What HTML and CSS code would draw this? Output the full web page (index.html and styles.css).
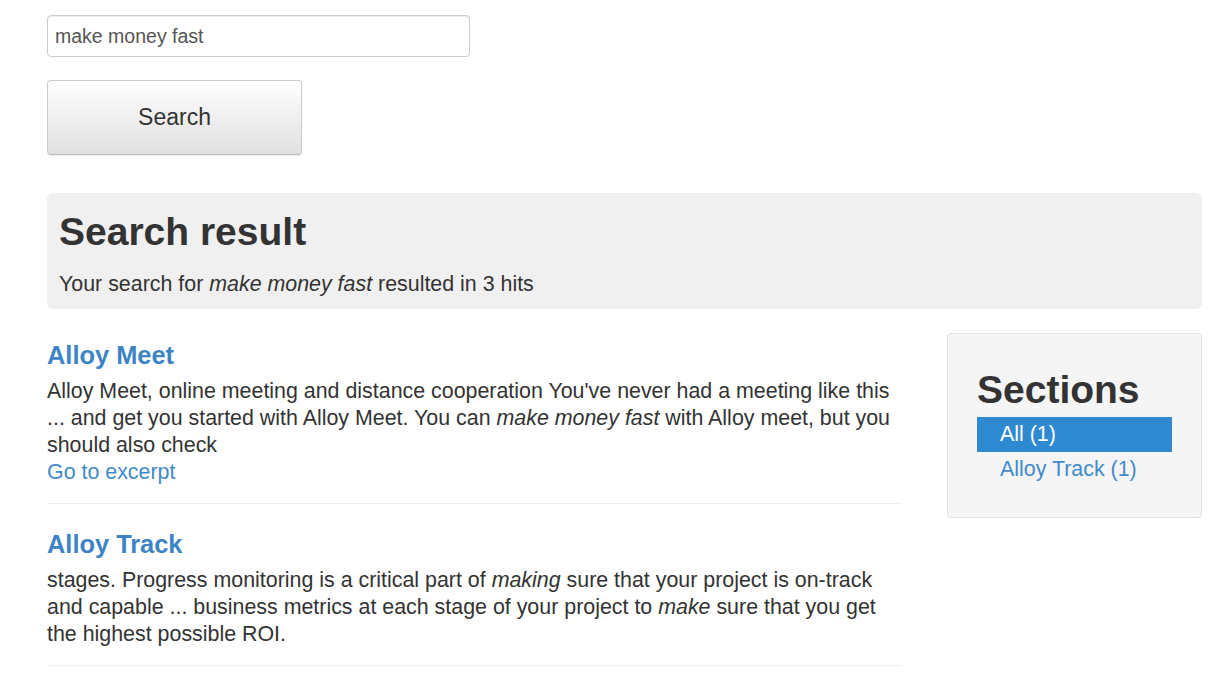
FILE: index.html
```html
<!DOCTYPE html>
<html lang="en">
<head>
    <meta charset="UTF-8">
    <meta name="viewport" content="width=device-width, initial-scale=1.0">
    <title>Search</title>
    <link rel="stylesheet" href="styles.css">
</head>
<body>

    <div class="page">
        <form class="search-form">
            <input type="text" class="search-input" value="make money fast">
            <button type="button" class="search-button">Search</button>
        </form>

        <div class="jumbo">
            <h1>Search result</h1>
            <p>Your search for <em>make money fast</em> resulted in 3 hits</p>
        </div>

        <div class="main">
            <div class="hits">
                <div class="hit">
                    <h3><a href="#">Alloy Meet</a></h3>
                    <p>Alloy Meet, online meeting and distance cooperation You've never had a meeting like this ... and get you started with Alloy Meet. You can <em>make money fast</em> with Alloy meet, but you should also check</p>
                    <a href="#" class="excerpt">Go to excerpt</a>
                </div>
                <div class="hit">
                    <h3><a href="#">Alloy Track</a></h3>
                    <p>stages. Progress monitoring is a critical part of <em>making</em> sure that your project is on-track and capable ... business metrics at each stage of your project to <em>make</em> sure that you get the highest possible ROI.</p>
                </div>
            </div>

            <div class="well">
                <h2>Sections</h2>
                <ul class="nav">
                    <li class="active"><a href="#">All (1)</a></li>
                    <li><a href="#">Alloy Track (1)</a></li>
                </ul>
            </div>
        </div>
    </div>

</body>
</html>
```

FILE: styles.css
```css
body {
    margin: 0;
    font-family: "Liberation Sans", Arial, sans-serif;
    font-size: 21.4px;
    line-height: 27px;
    color: #333;
    background: #fff;
}
a {
    color: #428bca;
    text-decoration: none;
}
.page {
    padding: 15px 28px 0 47px;
}
.search-form {
    display: flex;
    flex-direction: column;
    align-items: flex-start;
}
.search-input {
    box-sizing: border-box;
    width: 423px;
    height: 42px;
    padding: 0 7px;
    border: 1px solid #ccc;
    border-radius: 4px;
    box-shadow: inset 0 1px 1px rgba(0, 0, 0, 0.075);
    font-family: inherit;
    font-size: 19.5px;
    color: #555;
}
.search-button {
    box-sizing: border-box;
    margin-top: 23px;
    width: 255px;
    height: 75px;
    border: 1px solid #ccc;
    border-bottom-color: #bbb;
    border-radius: 4px;
    background: linear-gradient(to bottom, #fff 0%, #e0e0e0 100%);
    box-shadow: 0 1px 1px rgba(0, 0, 0, 0.08);
    font-family: inherit;
    font-size: 23px;
    color: #333;
}
.jumbo {
    margin-top: 38px;
    padding: 17px 12px 11px;
    background: #f0f0f0;
    border-radius: 6px;
}
.jumbo h1 {
    margin: 0 0 18px;
    font-size: 39px;
    line-height: 43px;
}
.jumbo p {
    margin: 0;
}
.main {
    display: grid;
    grid-template-columns: 855px 255px;
    column-gap: 45px;
    align-items: start;
}
.hits {
    margin-top: 31px;
}
.hit {
    padding-bottom: 17px;
    margin-bottom: 25px;
    border-bottom: 1px solid #eee;
}
.hit h3 {
    margin: 0 0 8px;
    font-size: 25.4px;
    line-height: 30px;
}
.hit h3 a {
    color: #3d84c6;
}
.hit p {
    margin: 0;
}
.excerpt {
    display: block;
}
.well {
    margin-top: 24px;
    padding: 34px 29px 30px;
    background: #f5f5f5;
    border: 1px solid #e3e3e3;
    border-radius: 4px;
}
.well h2 {
    margin: 0 0 6px;
    font-size: 39px;
    line-height: 43px;
}
.nav {
    list-style: none;
    margin: 0;
    padding: 0;
}
.nav a {
    display: block;
    padding: 4px 23px;
}
.nav .active a {
    background: #2e89d1;
    color: #fff;
}
```
